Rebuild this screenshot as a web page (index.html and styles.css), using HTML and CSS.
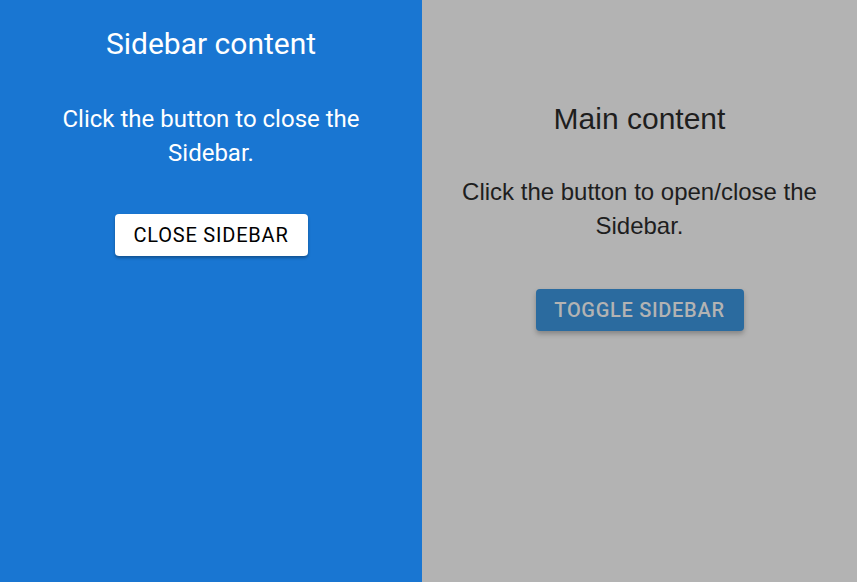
FILE: index.html
```html
<!DOCTYPE html>
<html>
<head>
<meta charset="utf-8">
<link rel="stylesheet" href="styles.css">
</head>
<body>
<div class="app">
  <aside class="sidebar">
    <h2 class="side-title">Sidebar content</h2>
    <p class="side-text">Click the button to close the Sidebar.</p>
    <button class="btn-close">CLOSE SIDEBAR</button>
  </aside>
  <main class="main">
    <h2 class="main-title">Main content</h2>
    <p class="main-text">Click the button to open/close the Sidebar.</p>
    <button class="btn-toggle">TOGGLE SIDEBAR</button>
  </main>
</div>
</body>
</html>
```
FILE: styles.css
```css
html, body { margin: 0; padding: 0; height: 100%; }
.app { display: flex; height: 582px; }
.sidebar {
  width: 422px; flex: none; background: #1976d2; color: #fff;
  font-family: Roboto, sans-serif; text-align: center;
  display: flex; flex-direction: column; align-items: center;
  padding: 26px 40px 0; box-sizing: border-box;
}
.side-title { margin: 0; font-size: 30px; font-weight: 400; line-height: 36px; }
.side-text { margin: 40px 0 0; font-size: 24px; line-height: 34px; }
.btn-close {
  margin-top: 44px; width: 193px; height: 42px; border: 0; border-radius: 4px;
  background: #fff; color: #000; font-family: Roboto, sans-serif; font-size: 20px;
  font-weight: 400; letter-spacing: 0.8px; box-shadow: 0 2px 3px rgba(0,0,0,0.3);
}
.main {
  flex: 1; background: #b3b3b3; color: #1e1e1e;
  font-family: "Liberation Sans", Arial, sans-serif; text-align: center;
  display: flex; flex-direction: column; align-items: center;
  padding: 101px 30px 0; box-sizing: border-box;
}
.main-title { margin: 0; font-size: 30px; font-weight: 400; line-height: 36px; }
.main-text { margin: 38px 0 0; font-size: 24px; line-height: 34px; }
.btn-toggle {
  margin-top: 46px; width: 208px; height: 42px; border: 0; border-radius: 4px;
  background: #2b6b9f; color: #b3b3b3; font-family: Roboto, sans-serif; font-size: 20px;
  font-weight: 500; letter-spacing: 0.7px; box-shadow: 0 3px 5px rgba(0,0,0,0.25);
}
```
